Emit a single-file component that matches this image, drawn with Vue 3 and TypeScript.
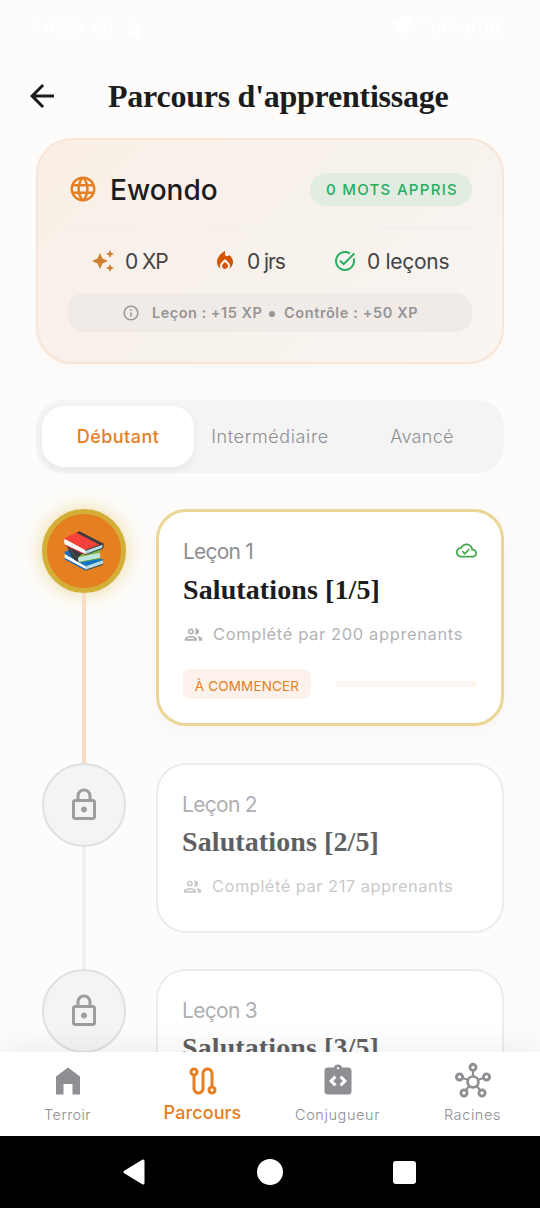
<script setup lang="ts">
interface Stat { kind: string; color: string; text: string; path: string }
interface Lesson { id: number; count?: number; open: boolean }
interface Tab { kind: string; label: string; path: string }

const globePath = 'M11.99 2C6.47 2 2 6.48 2 12s4.47 10 9.99 10C17.52 22 22 17.52 22 12S17.52 2 11.99 2zm6.93 6h-2.95c-.32-1.25-.78-2.45-1.38-3.56 1.84.63 3.37 1.91 4.33 3.56zM12 4.04c.83 1.2 1.48 2.53 1.91 3.96h-3.82c.43-1.43 1.08-2.76 1.91-3.96zM4.26 14C4.1 13.36 4 12.69 4 12s.1-1.36.26-2h3.38c-.08.66-.14 1.32-.14 2s.06 1.34.14 2H4.26zm.82 2h2.95c.32 1.25.78 2.45 1.38 3.56-1.84-.63-3.37-1.9-4.33-3.56zm2.95-8H5.08c.96-1.66 2.49-2.93 4.33-3.56C8.81 5.55 8.35 6.75 8.03 8zM12 19.96c-.83-1.2-1.48-2.53-1.91-3.96h3.82c-.43 1.43-1.08 2.76-1.91 3.96zM14.34 14H9.66c-.09-.66-.16-1.32-.16-2s.07-1.35.16-2h4.68c.09.65.16 1.32.16 2s-.07 1.34-.16 2zm.25 5.56c.6-1.11 1.06-2.31 1.38-3.56h2.95c-.96 1.65-2.49 2.93-4.33 3.56zM16.36 14c.08-.66.14-1.32.14-2s-.06-1.34-.14-2h3.38c.16.64.26 1.31.26 2s-.1 1.36-.26 2h-3.38z'
const cloudPath = 'M19.35 10.04C18.67 6.59 15.64 4 12 4 9.11 4 6.6 5.64 5.35 8.04 2.34 8.36 0 10.91 0 14c0 3.31 2.69 6 6 6h13c2.76 0 5-2.24 5-5 0-2.64-2.05-4.78-4.65-4.96zM19 18H6c-2.21 0-4-1.79-4-4 0-2.05 1.53-3.76 3.56-3.97l1.07-.11.5-.95C8.08 7.14 9.94 6 12 6c2.62 0 4.88 1.86 5.39 4.43l.3 1.5 1.53.11c1.56.1 2.78 1.41 2.78 2.96 0 1.65-1.35 3-3 3zm-9-3.82l-2.09-2.09L6.5 13.5 10 17l6.01-6.01-1.41-1.41z'
const groupPath = 'M9 13.75c-2.34 0-7 1.17-7 3.5V19h14v-1.75c0-2.33-4.66-3.5-7-3.5zM4.34 17c.84-.58 2.87-1.25 4.66-1.25s3.82.67 4.66 1.25H4.34zM9 12c1.93 0 3.5-1.57 3.5-3.5S10.93 5 9 5 5.5 6.57 5.5 8.5 7.07 12 9 12zm0-5c.83 0 1.5.67 1.5 1.5S9.83 10 9 10s-1.5-.67-1.5-1.5S8.17 7 9 7zm7.04 6.81c1.16.84 1.96 1.96 1.96 3.44V19h4v-1.75c0-2.02-3.5-3.17-5.96-3.44zM15 12c1.93 0 3.5-1.57 3.5-3.5S16.93 5 15 5c-.54 0-1.04.13-1.5.35.63.89 1 1.98 1 3.15s-.37 2.26-1 3.15c.46.22.96.35 1.5.35z'
const lockPath = 'M18 8h-1V6c0-2.76-2.24-5-5-5S7 3.24 7 6v2H6c-1.1 0-2 .9-2 2v10c0 1.1.9 2 2 2h12c1.1 0 2-.9 2-2V10c0-1.1-.9-2-2-2zM9 6c0-1.66 1.34-3 3-3s3 1.34 3 3v2H9V6zm9 14H6V10h12v10zm-6-3c1.1 0 2-.9 2-2s-.9-2-2-2-2 .9-2 2 .9 2 2 2z'

const stats: Stat[] = [
  { kind: 'xp', color: '#cd7f32', text: '0 XP', path: 'M19 9l1.25-2.75L23 5l-2.75-1.25L19 1l-1.25 2.75L15 5l2.75 1.25L19 9zm-7.5.5L9 4 6.5 9.5 1 12l5.5 2.5L9 20l2.5-5.5L17 12l-5.5-2.5zM19 15l-1.25 2.75L15 19l2.75 1.25L19 23l1.25-2.75L23 19l-2.75-1.25L19 15z' },
  { kind: 'days', color: '#d35400', text: '0 jrs', path: 'M12 12.9l-2.13 2.09c-.56.56-.87 1.29-.87 2.07C9 18.68 10.35 20 12 20s3-1.32 3-2.94c0-.78-.31-1.52-.87-2.07L12 12.9zM16 6l-.44.55C14.38 8.02 12 7.19 12 5.3V2S4 6 4 13c0 2.92 1.56 5.47 3.89 6.86-.56-.79-.89-1.76-.89-2.8 0-1.32.52-2.56 1.47-3.5L12 10.1l3.53 3.47c.95.93 1.47 2.17 1.47 3.5 0 1.02-.31 1.96-.85 2.75 1.89-1.15 3.29-3.06 3.71-5.3.66-3.55-1.07-6.9-3.86-8.52z' },
  { kind: 'done', color: '#27ae60', text: '0 leçons', path: 'M22 5.18L10.59 16.6l-4.24-4.24 1.41-1.41 2.83 2.83 10-10L22 5.18zM19.79 10.22C19.92 10.79 20 11.39 20 12c0 4.42-3.58 8-8 8s-8-3.58-8-8 3.58-8 8-8c1.58 0 3.04.46 4.28 1.25l1.44-1.44C16.1 2.67 14.13 2 12 2 6.48 2 2 6.48 2 12s4.48 10 10 10 10-4.48 10-10c0-1.19-.22-2.33-.6-3.39l-1.61 1.61z' },
]

const lessons: Lesson[] = [
  { id: 1, count: 200, open: true },
  { id: 2, count: 217, open: false },
  { id: 3, open: false },
]

const tabs: Tab[] = [
  { kind: 'terroir', label: 'Terroir', path: 'M12 3L4 9v12h5v-7h6v7h5V9z' },
  { kind: 'parcours', label: 'Parcours', path: 'M19 15.18V7c0-2.21-1.79-4-4-4s-4 1.79-4 4v10c0 1.1-.9 2-2 2s-2-.9-2-2V8.82C8.16 8.4 9 7.3 9 6c0-1.66-1.34-3-3-3S3 4.34 3 6c0 1.3.84 2.4 2 2.82V17c0 2.21 1.79 4 4 4s4-1.79 4-4V7c0-1.1.9-2 2-2s2 .9 2 2v8.18c-1.16.41-2 1.51-2 2.82 0 1.66 1.34 3 3 3s3-1.34 3-3c0-1.3-.84-2.4-2-2.82zM6 7c-.55 0-1-.45-1-1s.45-1 1-1 1 .45 1 1-.45 1-1 1zm12 12c-.55 0-1-.45-1-1s.45-1 1-1 1 .45 1 1-.45 1-1 1z' },
  { kind: 'conjugueur', label: 'Conjugueur', path: 'M19 3h-4.18C14.4 1.84 13.3 1 12 1s-2.4.84-2.82 2H5c-1.1 0-2 .9-2 2v14c0 1.1.9 2 2 2h14c1.1 0 2-.9 2-2V5c0-1.1-.9-2-2-2zm-8 11.17l-1.41 1.42L6 12l3.59-3.59L11 9.83 8.83 12 11 14.17zm1-9.92c-.41 0-.75-.34-.75-.75s.34-.75.75-.75.75.34.75.75-.34.75-.75.75zm2.41 11.34L13 14.17 15.17 12 13 9.83l1.41-1.42L18 12l-3.59 3.59z' },
  { kind: 'racines', label: 'Racines', path: '' },
]
</script>

<template>
  <div class="phone">
    <div class="status">
      <span class="clock">14:35</span>
      <svg class="st-dot" width="50" height="24" viewBox="0 0 50 24">
        <circle cx="10" cy="12" r="8.6" fill="none" stroke="#fff" stroke-width="2" />
        <path d="M5 7h10q0 5-5 5t-5-5z M37 11h10v11H37z" fill="#fff" />
        <path d="M39 6q3-5 6 0" fill="none" stroke="#fff" stroke-width="1.5" />
      </svg>
      <span class="grow"></span>
      <svg width="22" height="20" viewBox="0 0 22 20"><path d="M0 4Q11-4 22 4L11 20z" fill="#fff" /></svg>
      <span class="net">3G</span>
      <svg width="13" height="14" viewBox="0 0 13 14"><path d="M0 8h3v6H0zM5 4h3v10H5zM10 0h3v14h-3z" fill="#fff" /></svg>
      <span class="net second">3G</span>
      <svg width="13" height="14" viewBox="0 0 13 14"><path d="M0 8h3v6H0zM5 4h3v10H5zM10 0h3v14h-3z" fill="#fff" /></svg>
      <svg class="batt" width="13" height="20" viewBox="0 0 13 20"><path d="M1 3h3V1h5v2h3v16H1zM7 6l-3 6h2v4l3-6H7z" fill="none" stroke="#fff" stroke-width="1.6" /></svg>
    </div>

    <header class="header">
      <svg class="back" width="36" height="36" viewBox="0 0 24 24"><path d="M20 11H7.83l5.59-5.59L12 4l-8 8 8 8 1.41-1.41L7.83 13H20v-2z" fill="#1c1c1e" /></svg>
      <h1>Parcours d'apprentissage</h1>
    </header>

    <main class="content">
      <section class="hero">
        <div class="hero-top">
          <svg width="30" height="30" viewBox="0 0 24 24"><path :d="globePath" fill="#e67e22" /></svg>
          <span class="lang">Ewondo</span>
          <span class="pill">0 MOTS APPRIS</span>
        </div>
        <div class="stats">
          <div v-for="s in stats" :key="s.kind" class="stat" :class="s.kind">
            <svg width="24" height="24" viewBox="0 0 24 24"><path :d="s.path" :fill="s.color" /></svg>
            <span>{{ s.text }}</span>
          </div>
        </div>
        <div class="info">
          <svg width="18" height="18" viewBox="0 0 24 24"><path d="M11 7h2v2h-2zm0 4h2v6h-2zm1-9C6.48 2 2 6.48 2 12s4.48 10 10 10 10-4.48 10-10S17.52 2 12 2zm0 18c-4.41 0-8-3.59-8-8s3.59-8 8-8 8 3.59 8 8-3.59 8-8 8z" fill="#98979a" /></svg>
          <span class="i-a">Leçon : +15 XP</span><i class="bullet"></i><span class="i-b">Contrôle : +50 XP</span>
        </div>
      </section>

      <div class="levels">
        <div class="level active"><span>Débutant</span></div>
        <div class="level mid"><span>Intermédiaire</span></div>
        <div class="level adv"><span>Avancé</span></div>
      </div>

      <div v-for="l in lessons" :key="l.id" class="row" :class="{ open: l.open }">
        <div class="rail">
          <div class="node">
            <svg v-if="l.open" class="books" width="42" height="42" viewBox="100 106 126 126">
              <path d="M105 171l18-6 97 30-52 19z" fill="#1272cf" />
              <path d="M105 174l63 37v16l-63-35z" fill="#fff" />
              <path d="M105 171l63 39v5l-63-37zM105 189l63 34v5l-63-34z" fill="#1468b8" />
              <path d="M168 213l52-19v13l-52 18z" fill="#b5dce4" />
              <path d="M168 210l52-17 2 3-54 19z" fill="#1973b5" />
              <path d="M168 225l52-18 1 3-53 18z" fill="#28506b" />
              <path d="M148 176l66-14-4 12-66 18z" fill="#76b83f" />
              <path d="M147 188l62-14q5 8 1 17l-62 12q-6-8-1-15z" fill="#bde5dc" />
              <path d="M108 148l52 28-13 10q-5 7 1 17-13-4-22-17z" fill="#363a3c" />
              <path d="M147 202l63-12 2 3-64 11z" fill="#5a9c46" />
              <path d="M115 158l20 29M122 161l20 30" stroke="#55595c" stroke-width="2" />
              <path d="M105 133l63 33v15l-60-29q-7-8-3-19z" fill="#fff" />
              <path d="M168 166l51-17q5 5 0 12l-51 20z" fill="#b3dbe5" />
              <path d="M104 131l45-21 73 37-54 20z" fill="#f5413a" />
              <path d="M141 114l8-4 73 37-11 4z" fill="#3a3c3e" />
              <path d="M166 166l55-20q4 9-1 16l-52 19v-3l49-18q3-5 1-10l-50 18z" fill="#3b4144" />
              <path d="M107 150l61 28v4l-61-29z" fill="#c9302f" />
            </svg>
            <svg v-else width="36" height="36" viewBox="0 0 24 24"><path :d="lockPath" fill="#9e9e9e" /></svg>
          </div>
          <div class="line"></div>
        </div>
        <article class="card">
          <div class="inner">
            <div class="c-top">
              <span class="num">Leçon {{ l.id }}</span>
              <svg v-if="l.open" class="cloud" width="21" height="21" viewBox="0 0 24 24"><path :d="cloudPath" fill="#43a84a" /></svg>
            </div>
            <h2>Salutations [{{ l.id }}/5]</h2>
            <div v-if="l.count" class="people">
              <svg width="21" height="21" viewBox="0 0 24 24"><path :d="groupPath" fill="#b3b3b5" /></svg>
              <span>Complété par {{ l.count }} apprenants</span>
            </div>
            <div v-if="l.open" class="c-foot">
              <span class="badge">À COMMENCER</span>
              <span class="progress"></span>
            </div>
          </div>
        </article>
      </div>
    </main>

    <nav class="nav">
      <div v-for="t in tabs" :key="t.kind" class="tab" :class="t.kind">
        <svg width="36" height="36" viewBox="0 0 24 24">
          <path v-if="t.path" :d="t.path" fill="currentColor" />
          <g v-else fill="none" stroke="currentColor">
            <path d="M12 5.2V9M5 10l3.6 1.2M19 10l-3.6 1.2M7.2 18.2l2.4-2.8M16.8 18.2l-2.4-2.8" stroke-width="1.5" />
            <circle cx="12" cy="12.6" r="3.6" stroke-width="1.8" />
            <g stroke-width="1.9">
              <circle cx="12" cy="2.9" r="2.05" /><circle cx="3" cy="9.3" r="2.05" /><circle cx="21" cy="9.3" r="2.05" />
              <circle cx="6" cy="20" r="2.05" /><circle cx="18" cy="20" r="2.05" />
            </g>
          </g>
        </svg>
        <span>{{ t.label }}</span>
      </div>
    </nav>

    <div class="sysbar">
      <svg width="26" height="28" viewBox="0 0 26 28"><path d="M22 3v22L4 14z" fill="#fff" stroke="#fff" stroke-width="3" stroke-linejoin="round" /></svg>
      <span class="home"></span>
      <span class="recent"></span>
    </div>
  </div>
</template>

<style>
body { background: #fdfcfa; }
</style>

<style scoped>
.phone { width: 540px; height: 1208px; display: flex; flex-direction: column; overflow: hidden; background: #fdfcfa; font-family: Inter, "Liberation Sans", sans-serif; color: #1c1c1e; }
.phone * { box-sizing: border-box; }
svg { display: block; flex: none; overflow: visible; }
span { white-space: nowrap; }
.status { height: 54px; flex: none; display: flex; align-items: center; padding: 0 41px 0 31px; color: #fff; }
.clock { font: 500 21px Roboto, sans-serif; width: 52px; }
.st-dot { margin-left: 10px; }
.grow { flex: 1; }
.net { font: 500 10px Roboto, sans-serif; align-self: flex-start; margin: 16px 2px 0 3px; }
.second { margin: 20px 2px 0; }
.batt { margin-left: 12px; }
.header { height: 84px; flex: none; display: flex; align-items: center; padding-left: 24px; }
.header h1 { margin: 0 0 0 48px; font: 700 32px/40px "Liberation Serif", serif; letter-spacing: -0.25px; white-space: nowrap; }
.content { flex: 1; min-height: 0; overflow: hidden; padding: 0 36px; }
.hero { height: 225.5px; border: 2px solid #fae4d3; border-radius: 36px; padding: 33px 30px 0; background: linear-gradient(135deg, #f9efe4 0%, #f9f0ea 25%, #f7f2ec 55%, #f9f5f1 100%); box-shadow: 0 6px 18px rgba(0, 0, 0, 0.02); }
.hero-top { height: 55px; display: flex; align-items: flex-start; border-bottom: 1.5px solid #efeeed; }
.hero-top svg { margin-top: 1px; }
.lang { font-size: 28px; line-height: 34px; font-weight: 500; margin-left: 12px; flex: 1; }
.pill { width: 162px; height: 33px; border-radius: 17px; background: #e2ede2; color: #27ae60; font-size: 15px; font-weight: 500; letter-spacing: 1.3px; display: flex; align-items: center; justify-content: center; padding-left: 2px; }
.stats { height: 65px; display: flex; align-items: center; padding-left: 23px; }
.stat { display: flex; align-items: center; gap: 10px; font-size: 21px; letter-spacing: -1.1px; color: #434345; height: 30px; }
.stat span { margin-top: 1px; }
.stat.xp { width: 122px; }
.stat.days { width: 120px; }
.stat.done { letter-spacing: -0.3px; }
.info { height: 39px; border-radius: 16px; background: #f0ebe6; color: #949498; font-size: 14.5px; font-weight: 600; letter-spacing: 0.5px; display: flex; align-items: center; padding-left: 54px; }
.i-a { margin-left: 12px; width: 109px; }
.i-b { letter-spacing: 0.6px; }
.bullet { width: 6px; height: 6px; border-radius: 50%; background: #949498; margin: 3px 9px 0 8px; }
.levels { height: 73px; margin-top: 36.5px; border-radius: 27px; background: #f4f4f4; display: flex; padding: 6px; }
.level { width: 152px; display: flex; align-items: center; justify-content: center; font-size: 18px; font-weight: 300; letter-spacing: 0.62px; color: #8e8e93; }
.level.adv { letter-spacing: 0.3px; }
.level.active { background: #fff; border-radius: 22px; color: #e67e22; font-weight: 500; letter-spacing: 0.45px; box-shadow: 0 3px 8px rgba(0, 0, 0, 0.06); }
.row { display: flex; margin: 0 0 0 6px; height: 206px; gap: 30px; }
.row.open { height: 254px; }
.levels + .row { margin-top: 36px; }
.rail { width: 84px; display: flex; flex-direction: column; align-items: center; }
.node { width: 84px; height: 84px; flex: none; border-radius: 50%; border: 2px solid #e0e0e0; background: #f4f4f4; display: flex; align-items: center; justify-content: center; }
.open .node { background: #e67e22; border: 5px solid #d4af37; box-shadow: 0 0 18px 2px rgba(212, 175, 55, 0.38); }
.line { width: 4px; flex: 1; background: #f0f0ee; }
.open .line { background: #f8dcc6; }
.card { width: 348px; height: 170px; border: 2px solid #ececec; border-radius: 30px; background: #fff; padding: 24px; }
.card .inner { opacity: 0.7; }
.open .card { height: 217px; border: 3px solid #ead796; box-shadow: 0 6px 18px rgba(0, 0, 0, 0.03); }
.open .card .inner { opacity: 1; }
.c-top { height: 30px; display: flex; align-items: center; justify-content: space-between; }
.cloud { margin-top: -2px; }
.num { font-size: 21px; letter-spacing: -0.7px; color: #8e8e93; }
.open .num { letter-spacing: -0.8px; }
h2 { margin: 3px 0 0; font: 700 28px/40px "Liberation Serif", serif; letter-spacing: 0.1px; white-space: nowrap; }
.open h2 { margin-top: 4px; }
.people { display: flex; align-items: center; height: 24px; margin-top: 12px; gap: 9px; font-size: 16.5px; letter-spacing: 0.47px; color: #b3b3b5; }
.open .people { letter-spacing: 0.62px; }
.c-foot { display: flex; align-items: center; margin-top: 23px; }
.badge { width: 128px; height: 30px; border-radius: 8px; background: #fdf2eb; color: #e67e22; font-size: 13.5px; letter-spacing: 0.15px; padding-top: 3px; display: flex; align-items: center; justify-content: center; }
.progress { height: 6px; flex: 1; margin-left: 25px; border-radius: 3px; background: #fef6f1; }
.nav { height: 84px; flex: none; background: #fff; display: flex; position: relative; box-shadow: 0 -6px 30px rgba(0, 0, 0, 0.06); }
.tab { width: 135px; display: flex; flex-direction: column; align-items: center; padding-top: 11px; color: #8e8e93; font-size: 14.5px; font-weight: 300; letter-spacing: 0.6px; }
.tab span { line-height: 20px; margin-top: 6px; }
.tab.terroir { letter-spacing: 0.4px; }
.tab.parcours { color: #e67e22; font-size: 18px; font-weight: 500; letter-spacing: 0.1px; }
.tab.parcours span { margin-top: 4px; }
.sysbar { height: 72px; flex: none; background: #000; display: flex; align-items: center; padding-left: 121px; position: relative; }
.home { width: 26px; height: 26px; border-radius: 50%; background: #fff; margin-left: 110px; }
.recent { width: 23px; height: 23px; border-radius: 3px; background: #fff; margin-left: 110px; }
</style>
